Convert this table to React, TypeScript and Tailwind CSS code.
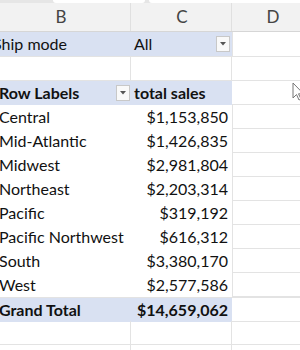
const rows: [string, string][] = [
  ['Central', '$1,153,850'],
  ['Mid-Atlantic', '$1,426,835'],
  ['Midwest', '$2,981,804'],
  ['Northeast', '$2,203,314'],
  ['Pacific', '$319,192'],
  ['Pacific Northwest', '$616,312'],
  ['South', '$3,380,170'],
  ['West', '$2,577,586'],
];

const font = { fontFamily: 'Lato, "Open Sans", sans-serif' };

const DropBtn = () => (
  <div className="w-[14px] h-[16px] bg-[#f9f9f9] border border-[#c8c8c8] flex items-center justify-center">
    <svg width="6" height="4" viewBox="0 0 6 4">
      <path d="M0 0h6L3 3.5z" fill="#555" />
    </svg>
  </div>
);

const App = () => {
  return (
    <div className="w-[300px] h-[350px] bg-white overflow-hidden relative text-[#111] text-[16px]" style={font}>
      {/* tab strip */}
      <div className="h-[3px] bg-[#e6e6e6] flex">
        <div className="ml-[53px] w-[92px] bg-white rounded-b-sm" />
        <div className="ml-[4px] flex-1 bg-white rounded-bl-sm" />
      </div>

      {/* column headers */}
      <div className="grid grid-cols-[131px_101px_1fr] h-[29px] bg-[#f2f2f2] border-b border-[#d6d6d6] text-[#444] text-[17px]">
        <div className="flex items-center justify-center border-r border-[#e0e0e0] pr-[8px]">B</div>
        <div className="flex items-center justify-center border-r border-[#e0e0e0] pl-[2px]">C</div>
        <div className="flex items-center justify-center pl-[14px]">D</div>
      </div>

      {/* filter row */}
      <div className="grid grid-cols-[131px_101px_1fr] h-[25px] border-b border-[#e3e3e3]">
        <div className="bg-[#d9e1f2] flex items-center overflow-hidden">
          <span className="ml-[-7px] whitespace-nowrap">Ship mode</span>
        </div>
        <div className="bg-[#d9e1f2] flex items-center justify-between pl-[3px] pr-[2px]">
          <span>All</span>
          <DropBtn />
        </div>
        <div className="border-l border-[#e3e3e3]" />
      </div>

      {/* empty row */}
      <div className="grid grid-cols-[131px_101px_1fr] h-[24px] border-b border-[#e3e3e3]">
        <div className="border-r border-[#e3e3e3]" />
        <div className="border-r border-[#e3e3e3]" />
        <div />
      </div>

      {/* pivot header */}
      <div className="grid grid-cols-[131px_101px_1fr] h-[24px] border-b border-[#e3e3e3]">
        <div className="bg-[#d9e1f2] flex items-center justify-between font-bold pr-[1px]">
          <span className="ml-[-1px] whitespace-nowrap">Row Labels</span>
          <DropBtn />
        </div>
        <div className="bg-[#d9e1f2] flex items-center font-bold pl-[3px] whitespace-nowrap">total sales</div>
        <div />
      </div>

      {rows.map(([label, value]) => (
        <div key={label} className="grid grid-cols-[131px_101px_1fr] h-[24px]">
          <div className="flex items-center whitespace-nowrap overflow-hidden">
            <span className="ml-[-1px]">{label}</span>
          </div>
          <div className="flex items-center justify-end pr-[4px]">{value}</div>
          <div className="border-b border-l border-[#e3e3e3]" />
        </div>
      ))}

      {/* grand total */}
      <div className="grid grid-cols-[131px_101px_1fr] h-[24px] border-t border-[#e3e3e3]">
        <div className="bg-[#d9e1f2] flex items-center font-bold whitespace-nowrap">
          <span className="ml-[-1px]">Grand Total</span>
        </div>
        <div className="bg-[#d9e1f2] flex items-center justify-end font-bold pr-[4px]">$14,659,062</div>
        <div className="border-b border-[#e3e3e3]" />
      </div>

      {[0, 1].map((i) => (
        <div key={i} className="grid grid-cols-[131px_101px_1fr] h-[24px] border-b border-[#e3e3e3]">
          <div className="border-r border-[#e3e3e3]" />
          <div className="border-r border-[#e3e3e3]" />
          <div />
        </div>
      ))}

      {/* mouse pointer */}
      <svg className="absolute left-[292px] top-[82px]" width="14" height="20" viewBox="0 0 14 20">
        <path d="M1 1v15l3.5-3.5 2.5 5.5 2-1-2.5-5.2h5z" fill="#fff" stroke="#777" strokeWidth="1" />
      </svg>
    </div>
  );
};

export default App;
